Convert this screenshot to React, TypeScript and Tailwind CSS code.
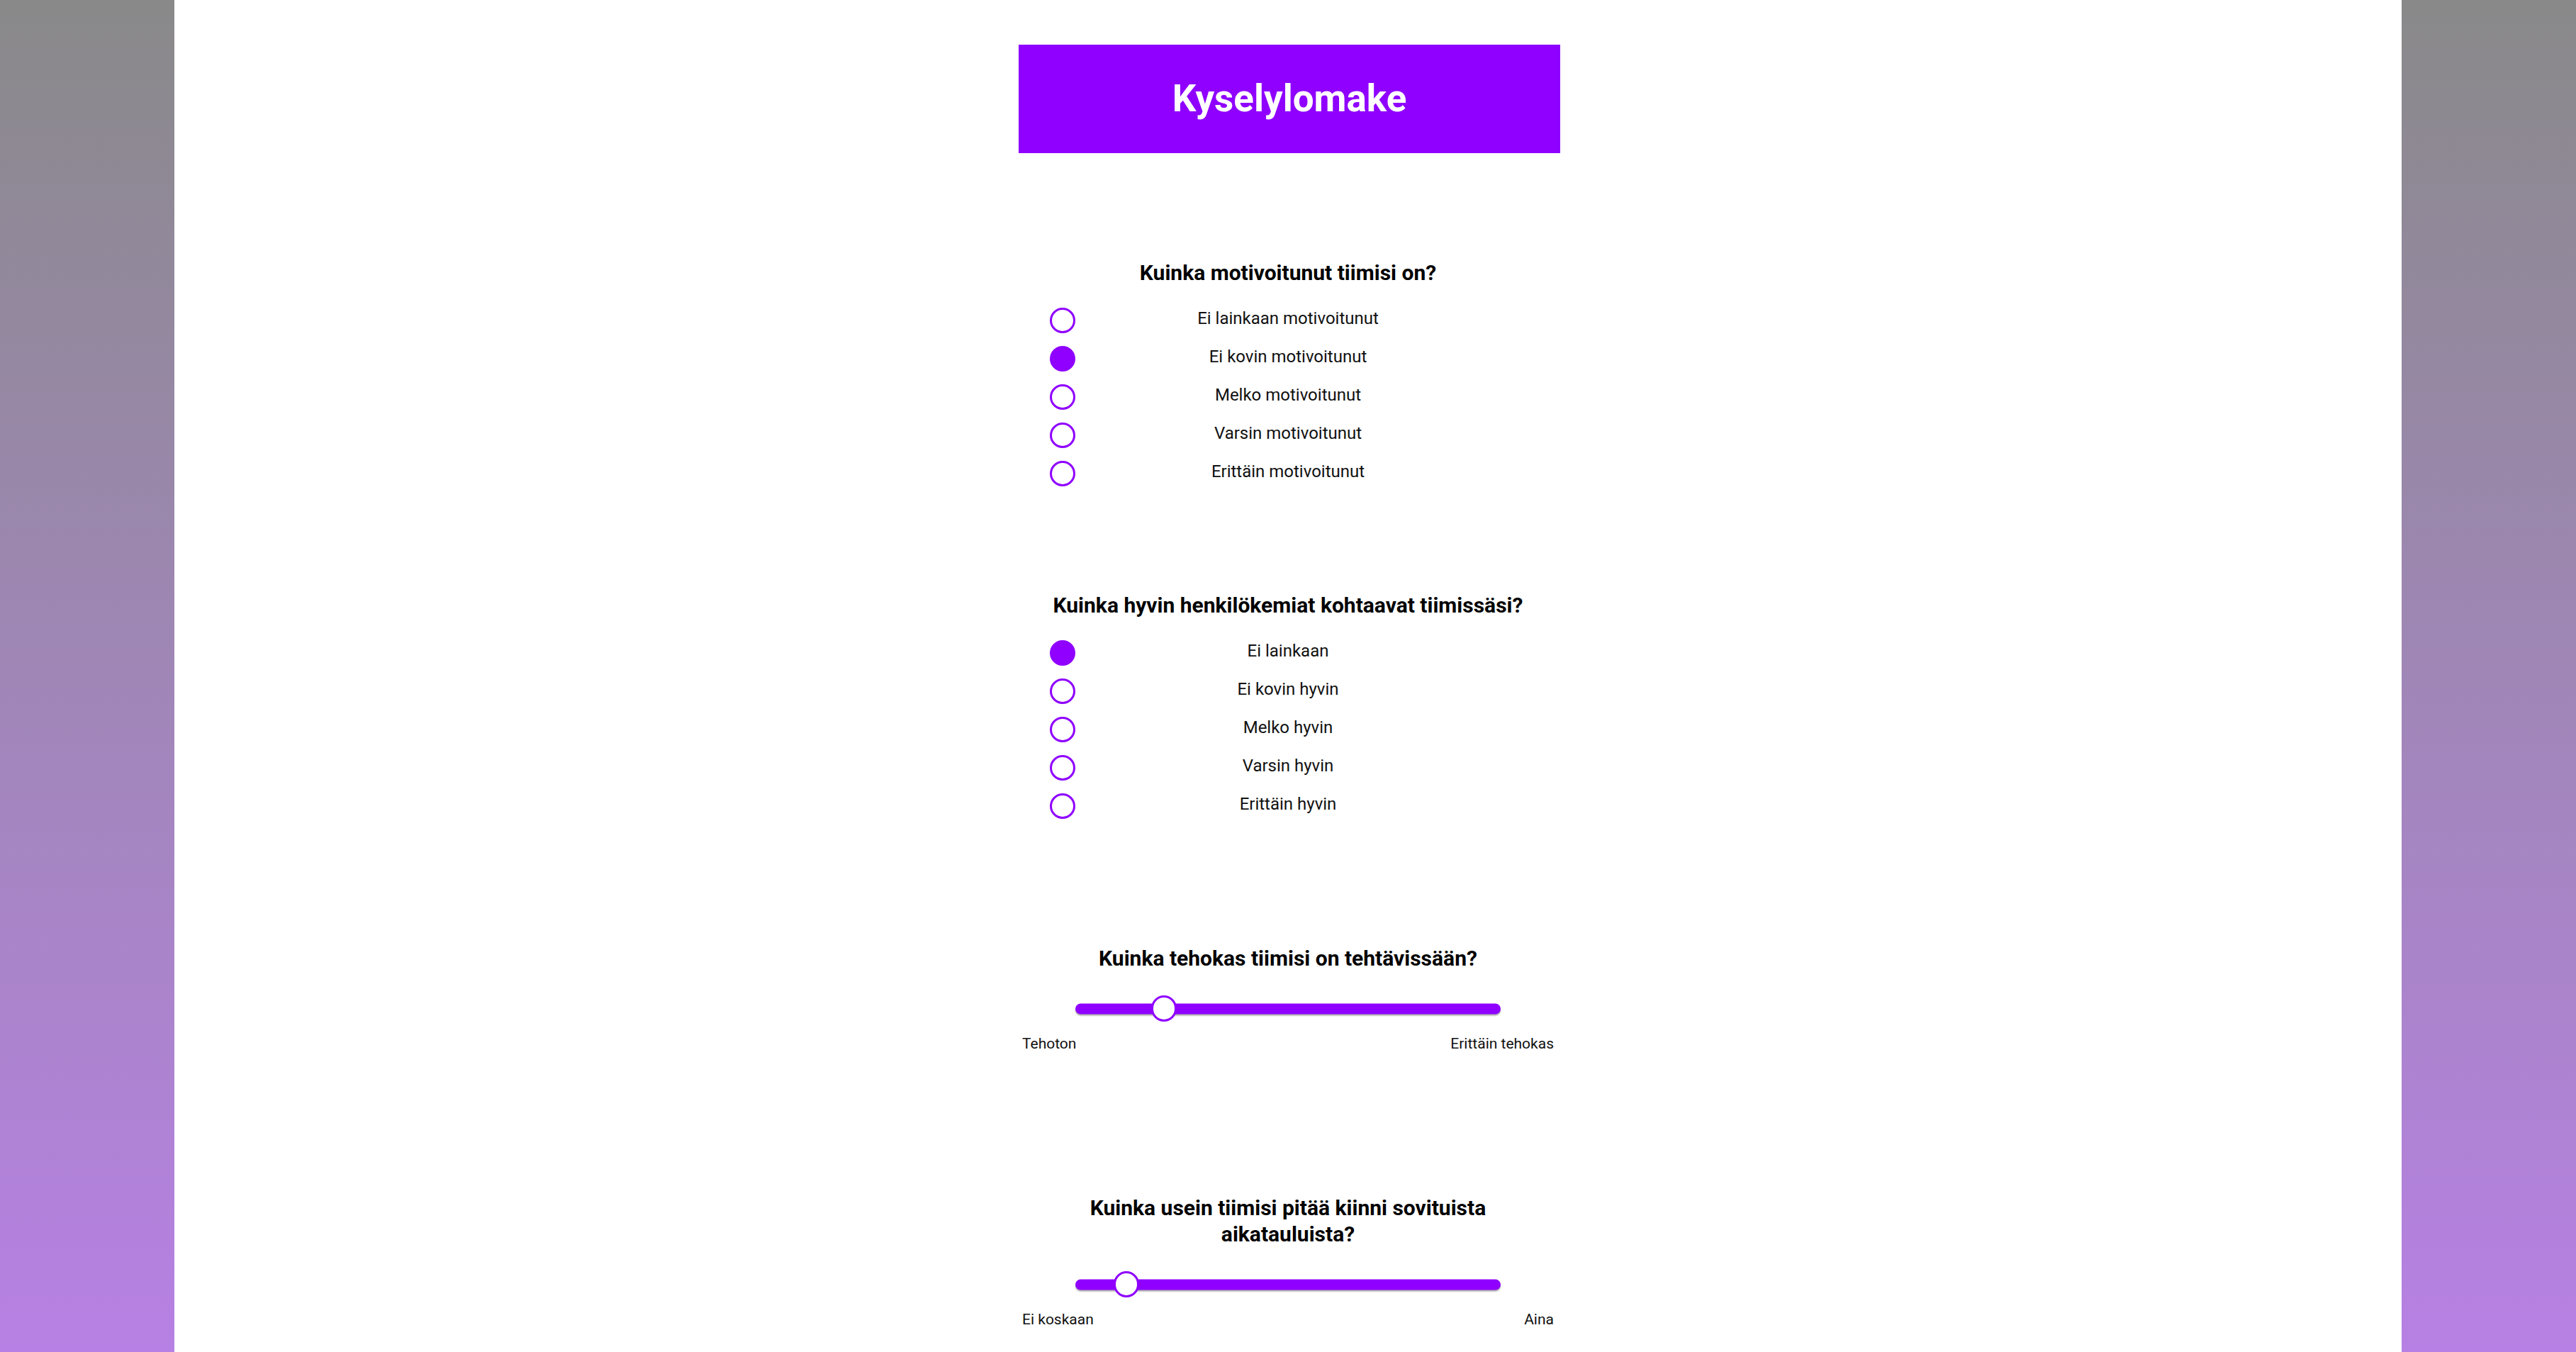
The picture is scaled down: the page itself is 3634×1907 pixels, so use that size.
const font = "font-['Roboto','Liberation_Sans',sans-serif]";

const questions = [
  {
    title: "Kuinka motivoitunut tiimisi on?",
    options: [
      "Ei lainkaan motivoitunut",
      "Ei kovin motivoitunut",
      "Melko motivoitunut",
      "Varsin motivoitunut",
      "Erittäin motivoitunut",
    ],
    selected: 1,
  },
  {
    title: "Kuinka hyvin henkilökemiat kohtaavat tiimissäsi?",
    options: ["Ei lainkaan", "Ei kovin hyvin", "Melko hyvin", "Varsin hyvin", "Erittäin hyvin"],
    selected: 0,
  },
];

function RadioQuestion({
  title,
  options,
  selected,
  className,
}: {
  title: string;
  options: string[];
  selected: number;
  className?: string;
}) {
  return (
    <section className={className}>
      <h2 className="text-center text-[30px] font-bold leading-[37px] text-black">{title}</h2>
      <div className="mt-[19px] flex flex-col">
        {options.map((opt, i) => (
          <label key={opt} className="grid h-[54px] grid-cols-[128px_1fr_128px] items-center">
            <span
              className={
                "size-[36px] translate-y-[3px] justify-self-center rounded-full border-[3.5px] border-[#8f00ff] " +
                (i === selected ? "bg-[#8f00ff]" : "bg-white")
              }
            />
            <span className="text-center text-[24px] leading-[28px] text-[#111]">{opt}</span>
            <span />
          </label>
        ))}
      </div>
    </section>
  );
}

function SliderQuestion({
  title,
  value,
  minLabel,
  maxLabel,
  className,
}: {
  title: string;
  value: number;
  minLabel: string;
  maxLabel: string;
  className?: string;
}) {
  return (
    <section className={className}>
      <h2 className="mx-auto max-w-[640px] text-center text-[30px] font-bold leading-[37px] text-black">
        {title}
      </h2>
      <div className="relative mx-auto mt-[34px] h-[37px] w-[600px]">
        <div className="absolute inset-x-0 top-1/2 h-[15px] -translate-y-1/2 rounded-full bg-[#8f00ff] shadow-[0_2px_2px_rgba(0,0,0,0.35)]" />
        <div
          className="absolute top-0 h-[37px] w-[36px] rounded-full border-[3.5px] border-[#8f00ff] bg-white"
          style={{ left: `${(value / 100) * 564}px` }}
        />
      </div>
      <div className="mt-[19px] flex justify-between px-[7px] text-[21px] leading-[25px] text-[#111]">
        <span>{minLabel}</span>
        <span>{maxLabel}</span>
      </div>
    </section>
  );
}

export default function App() {
  return (
    <div className={`${font} flex h-screen justify-center overflow-hidden bg-gradient-to-b from-[#898989] to-[#b780e4]`}>
      <main className="h-full w-[3142px] bg-white">
        <div className="mx-auto w-[764px]">
          <header className="mt-[63px] flex h-[153px] translate-x-[2px] items-center justify-center bg-[#8f00ff]">
            <h1 className="text-[53px] font-bold leading-none text-white">Kyselylomake</h1>
          </header>

          <RadioQuestion {...questions[0]} className="mt-[150px]" />
          <RadioQuestion {...questions[1]} className="mt-[143px]" />

          <SliderQuestion
            title="Kuinka tehokas tiimisi on tehtävissään?"
            value={19}
            minLabel="Tehoton"
            maxLabel="Erittäin tehokas"
            className="mt-[172px]"
          />
          <SliderQuestion
            title="Kuinka usein tiimisi pitää kiinni sovituista aikatauluista?"
            value={9.5}
            minLabel="Ei koskaan"
            maxLabel="Aina"
            className="mt-[200px]"
          />
        </div>
      </main>
    </div>
  );
}
